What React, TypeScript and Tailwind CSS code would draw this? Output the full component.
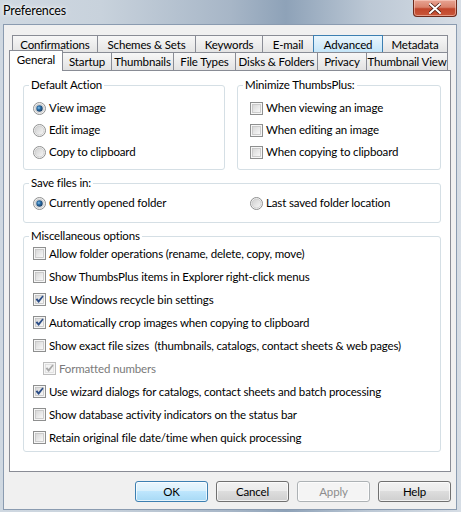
import { JSX } from "react";

const row1 = [
  { label: "Confirmations", w: "w-[86px]", hot: false },
  { label: "Schemes & Sets", w: "w-[99px]", hot: false },
  { label: "Keywords", w: "w-[68px]", hot: false },
  { label: "E-mail", w: "w-[52px]", hot: false },
  { label: "Advanced", w: "w-[70px]", hot: true },
  { label: "Metadata", w: "w-[66px]", hot: false },
];

const row2 = [
  { label: "General", w: "w-[54px]", active: true },
  { label: "Startup", w: "w-[50px]", active: false },
  { label: "Thumbnails", w: "w-[63px]", active: false },
  { label: "File Types", w: "w-[63px]", active: false },
  { label: "Disks & Folders", w: "w-[83px]", active: false },
  { label: "Privacy", w: "w-[50px]", active: false },
  { label: "Thumbnail View", w: "w-[82px]", active: false },
];

const misc = [
  { label: "Allow folder operations (rename, delete, copy, move)", checked: false },
  { label: "Show ThumbsPlus items in Explorer right-click menus", checked: false },
  { label: "Use Windows recycle bin settings", checked: true },
  { label: "Automatically crop images when copying to clipboard", checked: true },
  { label: "Show exact file sizes\u00a0 (thumbnails, catalogs, contact sheets & web pages)", checked: false },
  { label: "Formatted numbers", checked: true, sub: true },
  { label: "Use wizard dialogs for catalogs, contact sheets and batch processing", checked: true },
  { label: "Show database activity indicators on the status bar", checked: false },
  { label: "Retain original file date/time when quick processing", checked: false },
];

function Radio({ checked }: { checked?: boolean }) {
  return (
    <svg width="13" height="13" viewBox="0 0 13 13" className="shrink-0">
      <defs>
        <linearGradient id="rfill" x1="0" y1="0" x2="1" y2="1">
          <stop offset="0" stopColor="#cfcfcf" />
          <stop offset="1" stopColor="#f8f8f8" />
        </linearGradient>
        <radialGradient id="rdot" cx="0.4" cy="0.4" r="0.6">
          <stop offset="0" stopColor="#8cc6ec" />
          <stop offset="0.45" stopColor="#2b6fa8" />
          <stop offset="1" stopColor="#1b3f66" />
        </radialGradient>
      </defs>
      <circle cx="6.5" cy="6.5" r="6" fill="#f6f6f6" stroke="#8e8f8f" />
      <circle cx="6.5" cy="6.5" r="4.5" fill="url(#rfill)" stroke="#c9c9c9" strokeWidth="0.8" />
      {checked && <circle cx="6.5" cy="6.5" r="3.2" fill="url(#rdot)" />}
    </svg>
  );
}

function Check({ checked, disabled }: { checked?: boolean; disabled?: boolean }) {
  return (
    <svg width="13" height="13" viewBox="0 0 13 13" className="shrink-0">
      <defs>
        <linearGradient id="cfill" x1="0" y1="0" x2="1" y2="1">
          <stop offset="0" stopColor="#d6d6d6" />
          <stop offset="1" stopColor="#fafafa" />
        </linearGradient>
      </defs>
      <rect x="0.5" y="0.5" width="12" height="12" fill="#f6f6f6" stroke={disabled ? "#bdbdbd" : "#8e8f8f"} />
      <rect x="2.5" y="2.5" width="8" height="8" fill={disabled ? "#f4f4f4" : "url(#cfill)"} stroke={disabled ? "#dcdcdc" : "#c2c2c2"} strokeWidth="0.8" />
      {checked && (
        <path
          d="M2.6 6.6 L4.2 5.2 L5.6 7 L9.4 2.4 L10.6 3.6 L5.7 10 Z"
          fill={disabled ? "#a9a9a9" : "#2a4c86"}
        />
      )}
    </svg>
  );
}

function Group({ title, className, children }: { title: string; className: string; children: JSX.Element | JSX.Element[] }) {
  return (
    <div className={`relative border border-[#d5dfe5] rounded-[3px] ${className}`}>
      <span className="absolute left-[5px] top-[-8px] bg-white px-[2px] leading-[14px]">{title}</span>
      {children}
    </div>
  );
}

function Option({ kind, checked, label }: { kind: "radio" | "check"; checked?: boolean; label: string }) {
  return (
    <div className="flex h-[22px] items-center gap-[3px]">
      {kind === "radio" ? <Radio checked={checked} /> : <Check checked={checked} />}
      <span className="whitespace-nowrap">{label}</span>
    </div>
  );
}

function WinButton({ label, kind }: { label: string; kind?: "default" | "disabled" }) {
  const look =
    kind === "default"
      ? "border-[#3c7fb1] bg-[linear-gradient(#eaf6fd_0%,#d9f0fc_45%,#bee6fd_50%,#a7d9f5_100%)] text-black"
      : kind === "disabled"
      ? "border-[#adb2b5] bg-[#f4f4f4] text-[#8d8d8d]"
      : "border-[#707070] bg-[linear-gradient(#f2f2f2_0%,#ebebeb_45%,#dddddd_50%,#cfcfcf_100%)] text-black";
  return (
    <button
      type="button"
      className={`w-[73px] h-[21px] rounded-[3px] border shadow-[inset_0_0_0_1px_rgba(255,255,255,0.7)] leading-none ${look}`}
    >
      {label}
    </button>
  );
}

export default function App() {
  return (
    <div className="w-[461px] h-[512px] overflow-hidden flex flex-col font-['Lato',sans-serif] text-[11.5px] tracking-[-0.15px] text-black bg-[linear-gradient(90deg,#cfd8e1_0%,#c8d2dc_22%,#a7b6c7_50%,#8ea2b8_62%,#bcc8d5_80%,#d6dde5_100%)]">
      {/* title bar */}
      <div className="h-[24px] shrink-0 flex items-start justify-between pl-[3px] pr-[4px]">
        <span className="mt-[3px] text-[12.5px] leading-[16px] [text-shadow:0_0_6px_#fff,0_0_3px_#fff]">Preferences</span>
        <div className="w-[44px] h-[17px] rounded-b-[4px] border border-t-0 border-[#6d2a1c] bg-[linear-gradient(#e8a493_0%,#d9826c_45%,#c1452b_55%,#c9573a_100%)] shadow-[inset_0_0_0_1px_rgba(255,220,210,0.5)] flex items-center justify-center">
          <svg width="12" height="11" viewBox="0 0 12 11">
            <path d="M1 1 L11 10 M11 1 L1 10" stroke="#4a1a10" strokeWidth="3.4" strokeLinecap="round" />
            <path d="M1 1 L11 10 M11 1 L1 10" stroke="#ffffff" strokeWidth="2" strokeLinecap="round" />
          </svg>
        </div>
      </div>

      {/* client area */}
      <div className="flex-1 ml-[3px] mr-[4px] mb-[2px] bg-[#f0f0f0] border border-[#8a9bb0] pt-[10px] pl-[5px] flex flex-col">
        {/* back tab row */}
        <div className="flex ml-[3px] h-[17px] mb-[-2px]">
          {row1.map((t, i) => (
            <div
              key={t.label}
              className={`${t.w} ${i > 0 ? "ml-[-1px]" : ""} h-full shrink-0 whitespace-nowrap overflow-hidden border border-b-0 flex items-start justify-center pt-[1px] leading-[15px] ${
                t.hot
                  ? "border-[#3c7fb1] bg-[linear-gradient(#eaf6fd,#c4e5f8)] relative"
                  : "border-[#898c95] bg-[linear-gradient(#f7f7f7,#e4e4e4)]"
              }`}
            >
              {t.label}
            </div>
          ))}
        </div>
        {/* front tab row */}
        <div className="relative z-10 flex items-end h-[20px]">
          {row2.map((t, i) => (
            <div
              key={t.label}
              className={`${t.w} ${i > 0 ? "ml-[-1px]" : ""} shrink-0 whitespace-nowrap overflow-hidden border border-b-0 flex justify-center ${
                t.active
                  ? "relative z-10 h-[21px] mb-[-1px] bg-white border-[#898c95] items-start pt-[1px] leading-[16px]"
                  : "h-[18px] border-[#898c95] bg-[linear-gradient(#f7f7f7,#e2e2e2)] items-start pt-[1px] leading-[16px]"
              }`}
            >
              {t.label}
            </div>
          ))}
        </div>

        {/* panel */}
        <div className="w-[442px] h-[402px] bg-white border border-[#898c95] pl-[13px] pr-[9px] pt-[14px] flex flex-col">
          <div className="flex gap-[12px]">
            <Group title="Default Action" className="w-[202px] pt-[11px] pb-[6px] pl-[9px]">
              <Option kind="radio" checked label="View image" />
              <Option kind="radio" label="Edit image" />
              <Option kind="radio" label="Copy to clipboard" />
            </Group>
            <Group title="Minimize ThumbsPlus:" className="w-[204px] pt-[11px] pb-[6px] pl-[12px]">
              <Option kind="check" label="When viewing an image" />
              <Option kind="check" label="When editing an image" />
              <Option kind="check" label="When copying to clipboard" />
            </Group>
          </div>

          <Group title="Save files in:" className="mt-[13px] pt-[8px] pb-[8px] pl-[9px]">
            <div className="grid grid-cols-[217px_1fr]">
              <Option kind="radio" checked label="Currently opened folder" />
              <Option kind="radio" label="Last saved folder location" />
            </div>
          </Group>

          <Group title="Miscellaneous options" className="mt-[13px] pt-[5px] pb-[2px] pl-[9px]">
            {misc.map((m) => (
              <div key={m.label} className={`flex h-[23px] items-center gap-[3px] ${m.sub ? "pl-[10px]" : ""}`}>
                <Check checked={m.checked} disabled={m.sub} />
                <span className={`whitespace-nowrap ${m.sub ? "text-[#7a7a7a]" : ""}`}>{m.label}</span>
              </div>
            ))}
          </Group>
        </div>

        {/* buttons */}
        <div className="flex justify-end gap-[8px] mt-[9px] pr-[5px]">
          <WinButton label="OK" kind="default" />
          <WinButton label="Cancel" />
          <WinButton label="Apply" kind="disabled" />
          <WinButton label="Help" />
        </div>
      </div>
    </div>
  );
}
